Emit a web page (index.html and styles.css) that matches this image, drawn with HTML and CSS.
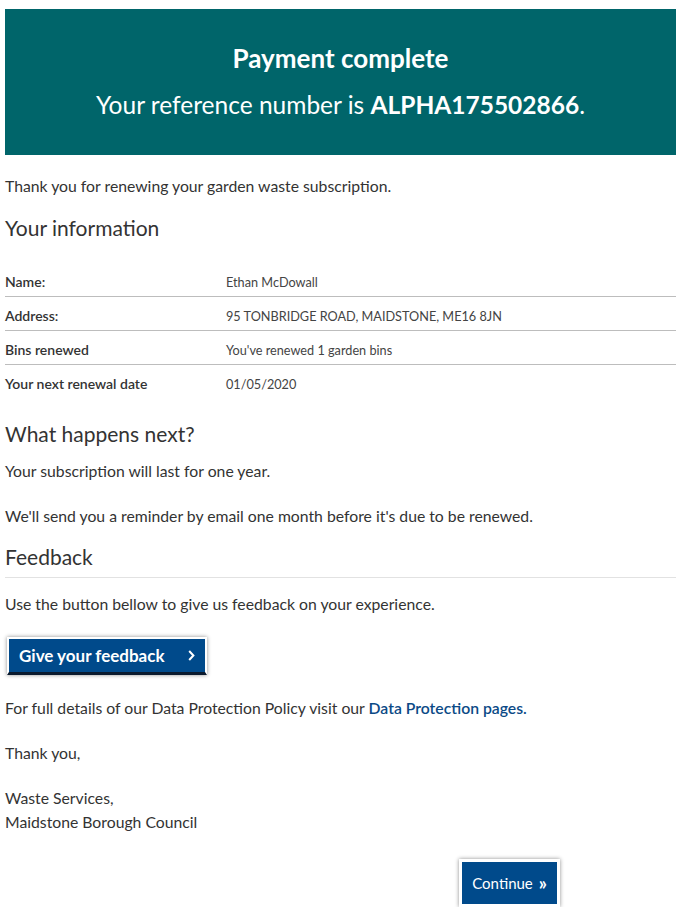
FILE: index.html
```html
<!DOCTYPE html>
<html lang="en">
<head>
<meta charset="utf-8">
<title>Payment complete</title>
<link rel="stylesheet" href="styles.css">
</head>
<body>
<main class="page">
  <section class="banner">
    <h1 class="banner-title">Payment complete</h1>
    <p class="banner-ref">Your reference number is <strong>ALPHA175502866</strong>.</p>
  </section>

  <p class="intro">Thank you for renewing your garden waste subscription.</p>

  <h2 class="heading">Your information</h2>
  <dl class="info">
    <div class="info-row"><dt>Name:</dt><dd>Ethan McDowall</dd></div>
    <div class="info-row"><dt>Address:</dt><dd>95 TONBRIDGE ROAD, MAIDSTONE, ME16 8JN</dd></div>
    <div class="info-row"><dt>Bins renewed</dt><dd>You've renewed 1 garden bins</dd></div>
    <div class="info-row"><dt>Your next renewal date</dt><dd>01/05/2020</dd></div>
  </dl>

  <h2 class="heading heading-next">What happens next?</h2>
  <p class="text tight">Your subscription will last for one year.</p>
  <p class="text">We'll send you a reminder by email one month before it's due to be renewed.</p>

  <h2 class="heading heading-rule">Feedback</h2>
  <p class="text tight">Use the button bellow to give us feedback on your experience.</p>
  <a class="btn-feedback" href="#">Give your feedback <svg class="chev" width="7" height="11" viewBox="0 0 7 11" aria-hidden="true"><path d="M1.2 1 L5.4 5.5 L1.2 10" fill="none" stroke="#fff" stroke-width="2"/></svg></a>

  <p class="text">For full details of our Data Protection Policy visit our <a class="link" href="#">Data Protection pages.</a></p>
  <p class="text">Thank you,</p>
  <p class="text">Waste Services,<br>Maidstone Borough Council</p>

  <div class="actions">
    <a class="btn-continue" href="#">Continue <span class="dchev">&raquo;</span></a>
  </div>
</main>
</body>
</html>
```
FILE: styles.css
```css
html, body {
  margin: 0;
  padding: 0;
  background: #fff;
}
body {
  font-family: Lato, "Noto Sans", sans-serif;
  color: #333;
  font-size: 15.75px;
  line-height: 24px;
}
.page {
  padding: 9px 15px 0 5px;
}
.banner {
  background: #00656a;
  color: #fff;
  text-align: center;
  height: 146px;
  box-sizing: border-box;
  padding-top: 31px;
}
.banner-title {
  margin: 0;
  font-size: 26px;
  line-height: 36px;
  font-weight: 700;
}
.banner-ref {
  margin: 11px 0 0;
  font-size: 24.5px;
  line-height: 36px;
}
.banner-ref strong {
  font-weight: 700;
}
.intro {
  margin: 19px 0 0;
}
.heading {
  font-weight: 400;
  font-size: 21px;
  line-height: 30px;
  margin: 15px 0 0;
  color: #333;
}
.info {
  margin: 20px 0 0;
}
.info-row {
  display: flex;
  align-items: flex-start;
  height: 34px;
  box-sizing: border-box;
  padding-top: 7px;
  line-height: 24px;
  border-bottom: 1px solid #bdbdbd;
}
.info-row:last-child {
  border-bottom: none;
}
.info dt {
  width: 221px;
  font-weight: 600;
  font-size: 14px;
  color: #333;
}
.info dd {
  margin: 0;
  font-size: 12.7px;
  color: #444;
}
.heading-next {
  margin-top: 20px;
}
.text {
  margin: 21px 0 0;
}
.text.tight {
  margin-top: 10px;
}
.heading-rule {
  margin-top: 14px;
  padding-bottom: 5px;
  border-bottom: 1px solid #e2e2e2;
}
.heading-rule + .text.tight {
  margin-top: 14px;
}
.btn-feedback {
  display: inline-flex;
  align-items: center;
  justify-content: space-between;
  width: 176px;
  height: 33px;
  box-sizing: content-box;
  margin: 21px 0 0 2px;
  padding: 0 10px 0 10px;
  background: #004a8b;
  color: #fff;
  font-weight: 700;
  font-size: 17px;
  text-decoration: none;
  border: 2px solid #fff;
  border-bottom: 3px solid #0a1a2e;
  box-shadow: 0 0 4px rgba(0, 0, 0, 0.45);
}
.chev {
  display: block;
}
.btn-feedback + .text {
  margin-top: 21px;
}
.link {
  color: #0b4a86;
  text-decoration: none;
  font-weight: 600;
}
.actions {
  display: flex;
  justify-content: flex-end;
  padding-right: 116px;
  margin-top: 25px;
}
.btn-continue {
  display: inline-flex;
  align-items: center;
  justify-content: center;
  height: 42px;
  padding: 0 10px;
  background: #004a8b;
  color: #fff;
  font-size: 15px;
  text-decoration: none;
  border: 3px solid #fff;
  box-shadow: 0 0 4px rgba(0, 0, 0, 0.45);
}
.dchev {
  margin-left: 6px;
  font-size: 18px;
  font-weight: 700;
}
```
